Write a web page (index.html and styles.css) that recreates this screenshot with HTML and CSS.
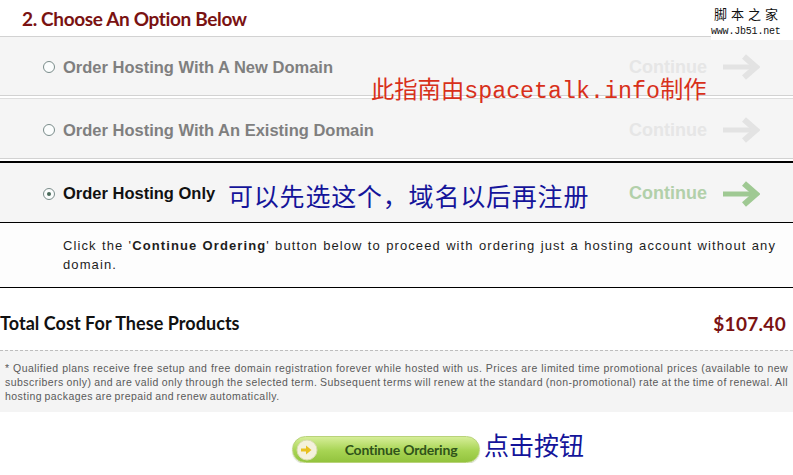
FILE: index.html
```html
<!DOCTYPE html>
<html>
<head>
<meta charset="utf-8">
<link rel="stylesheet" href="styles.css">
</head>
<body>
<div class="page">
  <h2 class="title">2. Choose An Option Below</h2>

  <div class="opt opt1">
    <span class="radio"></span>
    <span class="label">Order Hosting With A New Domain</span>
    <span class="cont">Continue</span>
    <svg class="arrow" viewBox="0 0 38 26"><path d="M1 13H32" stroke-width="5"/><path d="M22 2.5L34 13L22 23.5" stroke-width="6" fill="none"/></svg>
  </div>

  <div class="opt opt2">
    <span class="radio"></span>
    <span class="label">Order Hosting With An Existing Domain</span>
    <span class="cont">Continue</span>
    <svg class="arrow" viewBox="0 0 38 26"><path d="M1 13H32" stroke-width="5"/><path d="M22 2.5L34 13L22 23.5" stroke-width="6" fill="none"/></svg>
  </div>

  <div class="opt opt3">
    <span class="radio on"></span>
    <span class="label">Order Hosting Only</span>
    <span class="cont">Continue</span>
    <svg class="arrow" viewBox="0 0 38 26"><path d="M1 13H32" stroke-width="5"/><path d="M22 2.5L34 13L22 23.5" stroke-width="6" fill="none"/></svg>
  </div>

  <div class="desc">
    <p>Click the '<b>Continue Ordering</b>' button below to proceed with ordering just a hosting account without any domain.</p>
  </div>

  <div class="total">
    <span class="total-label">Total Cost For These Products</span>
    <span class="total-price">$107.40</span>
  </div>

  <div class="note">
    <p>* Qualified plans receive free setup and free domain registration forever while hosted with us. Prices are limited time promotional prices (available to new subscribers only) and are valid only through the selected term. Subsequent terms will renew at the standard (non-promotional) rate at the time of renewal. All hosting packages are prepaid and renew automatically.</p>
  </div>

  <div class="actions">
    <button class="order-btn">
      <span class="btn-icon">
        <svg viewBox="0 0 22 22"><circle cx="11" cy="11" r="10" fill="#f4f1dc" stroke="#d9dcb0" stroke-width="1"/><path d="M5 11H12" stroke="#e8c020" stroke-width="3"/><path d="M10 6.5L15.5 11L10 15.5Z" fill="#e8c020"/></svg>
      </span>
      <span class="btn-text">Continue Ordering</span>
    </button>
    <span class="cn-blue cn-click">点击按钮</span>
  </div>

  <div class="watermark">
    <div class="wm-cn">脚本之家</div>
    <div class="wm-url">www.Jb51.net</div>
  </div>
  <div class="cn-red">此指南由spacetalk.info制作</div>
  <div class="cn-blue cn-sel">可以先选这个，域名以后再注册</div>
</div>
</body>
</html>
```

FILE: styles.css
```css
* { box-sizing: border-box; }
html, body { margin: 0; padding: 0; background: #fff; }
body { font-family: "Liberation Sans", Arial, sans-serif; }

.page {
  position: relative;
  width: 793px;
}

.title {
  margin: 0;
  height: 36px;
  padding-left: 22px;
  display: flex;
  align-items: center;
  font-family: Lato, "Open Sans", sans-serif;
  font-weight: 700;
  font-size: 19px;
  color: #7a1212;
  letter-spacing: -0.35px;
}

.opt {
  display: flex;
  align-items: center;
  padding-left: 43px;
  padding-right: 33px;
  padding-top: 2px;
  background: #f5f5f5;
}
.opt1 {
  height: 60px;
  border-top: 1px solid #d2d2d2;
  border-bottom: 1px solid #d2d2d2;
  margin-bottom: 2px;
}
.opt2 {
  height: 61px;
  padding-top: 3px;
  border-top: 1px solid #dedede;
  border-bottom: 1px solid #d2d2d2;
  margin-bottom: 2px;
}
.opt3 {
  height: 62px;
  border-top: 2px solid #000;
  border-bottom: 1px solid #000;
}

.radio {
  width: 12px;
  height: 12px;
  border-radius: 50%;
  border: 1px solid #7a8c8a;
  background: #fbfdfd;
  margin-right: 8px;
  position: relative;
  flex: none;
}
.radio.on::after {
  content: "";
  position: absolute;
  left: 3px;
  top: 3px;
  width: 4px;
  height: 4px;
  border-radius: 50%;
  background: #4a6a5a;
}

.label {
  flex: 1;
  font-weight: 700;
  font-size: 16.5px;
  color: #7f7f7f;
}
.opt3 .label { color: #111; }

.cont {
  font-weight: 700;
  font-size: 18px;
  color: #e6e6e6;
  margin-right: 15px;
}
.opt3 .cont { color: #b2d0aa; }

.arrow {
  width: 38px;
  height: 26px;
  stroke: #e3e3e3;
  flex: none;
}
.opt3 .arrow { stroke: #9fc993; }

.desc {
  height: 65px;
  padding: 13px 17px 0 63px;
  border-bottom: 1px solid #000;
  background: #fdfdfd;
}
.desc p {
  margin: 0;
  font-size: 13px;
  line-height: 19px;
  color: #1e1e1e;
  text-align: justify;
  letter-spacing: 1.1px;
}

.total {
  height: 62px;
  display: flex;
  align-items: center;
  justify-content: space-between;
  padding-top: 8px;
  padding-right: 7px;
  font-family: Lato, "Open Sans", sans-serif;
  font-weight: 700;
}
.total-label {
  font-size: 18px;
  color: #111;
  letter-spacing: 0.05px;
}
.total-price {
  font-size: 19px;
  color: #7a1212;
  letter-spacing: 0.3px;
}

.note {
  border-top: 1px dashed #bdbdbd;
  background: #f4f4f4;
  height: 62px;
  padding: 10px 5px 0 5px;
}
.note p {
  margin: 0;
  font-size: 10.5px;
  line-height: 14px;
  color: #5a5a5a;
  text-align: justify;
  letter-spacing: 0.45px;
  word-spacing: -0.9px;
}

.actions {
  display: flex;
  align-items: center;
  padding-left: 292px;
  margin-top: 24px;
}
.order-btn {
  width: 188px;
  height: 27px;
  border-radius: 14px;
  border: 1px solid #b9d37a;
  background: linear-gradient(#d6ee98, #a7d453 55%, #93c33e);
  display: flex;
  align-items: center;
  padding: 0 0 0 3px;
  margin: 0;
  box-shadow: 0 1px 1px rgba(120,140,80,0.35);
}
.btn-icon {
  width: 22px;
  height: 22px;
  flex: none;
}
.btn-icon svg { width: 22px; height: 22px; display: block; }
.btn-text {
  flex: 1;
  text-align: center;
  padding-left: 5px;
  font-family: Lato, "Open Sans", sans-serif;
  font-weight: 700;
  font-size: 14px;
  color: #2f531a;
  letter-spacing: -0.2px;
}

.cn-blue {
  font-family: "Noto Sans CJK SC", sans-serif;
  color: #14149a;
  line-height: 1;
}
.cn-click {
  margin-left: 4px;
  margin-top: -11px;
  font-size: 25px;
}
.cn-sel {
  position: absolute;
  left: 228px;
  top: 183px;
  font-size: 25px;
  letter-spacing: 0.8px;
}

.cn-red {
  position: absolute;
  left: 371px;
  top: 81px;
  font-family: "Liberation Mono", "Noto Sans CJK SC", monospace;
  font-size: 23.3px;
  line-height: 1;
  color: #d8301a;
}

.watermark {
  position: absolute;
  right: 0;
  top: 0;
  width: 82px;
  padding-top: 5px;
  background: #fff;
  height: 40px;
  white-space: nowrap;
}
.wm-cn {
  font-family: "Noto Sans CJK SC", sans-serif;
  font-size: 13px;
  line-height: 18px;
  color: #111;
  padding-left: 3px;
  letter-spacing: 4px;
}
.wm-url {
  font-family: "Liberation Mono", monospace;
  font-size: 10px;
  line-height: 14px;
  color: #111;
  letter-spacing: -0.2px;
  padding-top: 2px;
}
```
